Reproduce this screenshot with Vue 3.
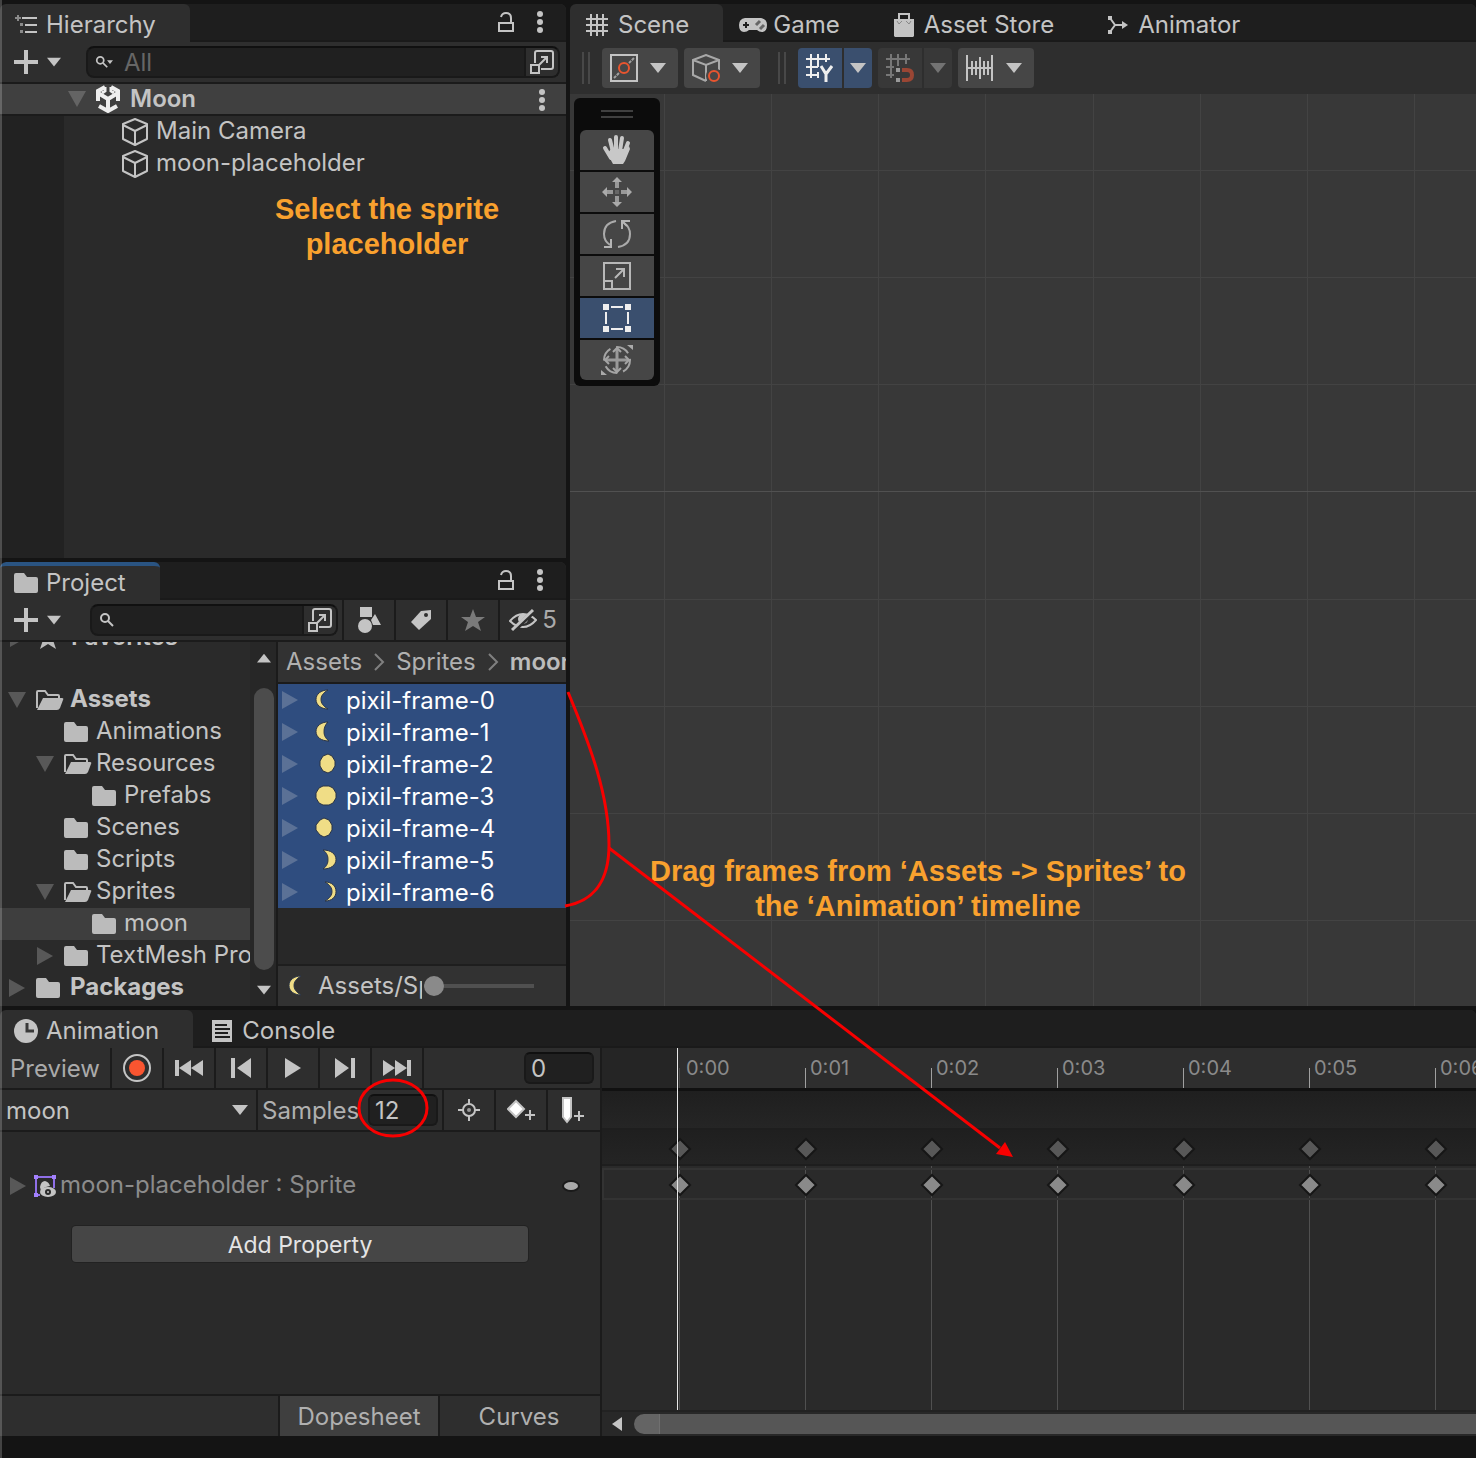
<script setup>
import { ref } from 'vue'

const hierarchySearch = ref('')
const projectSearch = ref('')
const currentFrame = ref('0')
const samples = ref('12')
const thumbSize = ref(0)

const sceneTabs = [
  { name: 'Scene', icon: 'i-grid', w: 22, active: true },
  { name: 'Game', icon: 'i-gamepad', w: 28, tight: true },
  { name: 'Asset Store', icon: 'i-bag', w: 20 },
  { name: 'Animator', icon: 'i-animator', w: 20 }
]

const tools = [
  { name: 'View', icon: 'i-hand' },
  { name: 'Move', icon: 'i-move' },
  { name: 'Rotate', icon: 'i-rotate' },
  { name: 'Scale', icon: 'i-scale' },
  { name: 'Rect', icon: 'i-rect', active: true },
  { name: 'Transform', icon: 'i-transform' }
]

const objects = ['Main Camera', 'moon-placeholder']

const folders = [
  { name: 'Assets', level: 0, arrow: 'open', open: true, bold: true },
  { name: 'Animations', level: 1 },
  { name: 'Resources', level: 1, arrow: 'open', open: true },
  { name: 'Prefabs', level: 2 },
  { name: 'Scenes', level: 1 },
  { name: 'Scripts', level: 1 },
  { name: 'Sprites', level: 1, arrow: 'open', open: true },
  { name: 'moon', level: 2, selected: true },
  { name: 'TextMesh Pro', level: 1, arrow: 'closed' },
  { name: 'Packages', level: 0, arrow: 'closed', bold: true }
]

const phases = [
  'M15 2C8 2 3 6 3 11.500C3 17 8 21 15 21C10 18 8 15 8 11.500C8 8 10 5 15 2Z',
  'M15 2C8 2 3 6 3 11.500C3 17 8 21 16 21C12 18 11 15 11 11.500C11 8 12 5 15 2Z',
  'M15 2L19 4L22 9V14L19 19L15 21L10 19L7 14V9L10 4Z',
  'M10 2H16L20 4L23 9V14L20 19L16 21H10L6 19L3 14V9L6 4Z',
  'M11 2L16 4L19 9V14L16 19L11 21L7 19L3 14V9L7 4Z',
  'M10 2C18 2 23 6 23 11.500C23 17 18 21 10 21C14 18 15 15 15 11.500C15 8 14 5 10 2Z',
  'M12 2C19 2 23 6 23 11.500C23 17 19 21 12 21C17 18 19 15 19 11.500C19 8 17 5 12 2Z'
]
const sprites = phases.map((path, i) => ({ name: `pixil-frame-${i}`, path }))

const playback = [
  { name: 'First key', icon: 'i-first' },
  { name: 'Previous key', icon: 'i-prev' },
  { name: 'Play', icon: 'i-play' },
  { name: 'Next key', icon: 'i-next' },
  { name: 'Last key', icon: 'i-last' }
]

const keys = [0, 1, 2, 3, 4, 5, 6].map((n) => `0:0${n}`)

const cell = 750 / 7
const columns = Array.from({ length: 24 }, (_, i) => Math.round(94 + i * cell))
const rows = Array.from({ length: 16 }, (_, i) => ({
  y: Math.round(76 + i * cell),
  axis: i === 3
}))
</script>

<template>
  <main class="editor">
    <svg class="sprite-sheet" aria-hidden="true">
      <symbol id="i-list" viewBox="0 0 24 20">
        <path d="M4 0V6M1 3H7" stroke="#8a8a8a" stroke-width="2" />
        <path d="M8 3H23M11 10H23M11 17H23" stroke="#c4c4c4" stroke-width="2" />
        <path d="M6 8h3v3h-3zM6 15h3v3h-3z" fill="#8a8a8a" />
      </symbol>
      <symbol id="i-plus" viewBox="0 0 24 24">
        <path d="M12 0V24M0 12H24" stroke="#c4c4c4" stroke-width="4" />
      </symbol>
      <symbol id="i-down" viewBox="0 0 16 10"><path d="M0 0H16L8 10Z" fill="currentColor" /></symbol>
      <symbol id="i-fold-open" viewBox="0 0 18 16"><path d="M0 0H18L9 16Z" fill="currentColor" /></symbol>
      <symbol id="i-fold-closed" viewBox="0 0 16 18"><path d="M0 0L16 9L0 18Z" fill="currentColor" /></symbol>
      <symbol id="i-search" viewBox="0 0 16 16">
        <circle cx="6" cy="6" r="4" fill="none" stroke="#c4c4c4" stroke-width="2" />
        <path d="M9 9L14 14" stroke="#c4c4c4" stroke-width="2" />
      </symbol>
      <symbol id="i-popout" viewBox="0 0 24 24">
        <path d="M5 13V3Q5 1 7 1H21Q23 1 23 3V17Q23 19 21 19H11" fill="none" stroke="#c4c4c4" stroke-width="2" />
        <path d="M1 15H9V23H1ZM9 15L17 7M11 7H17V13" fill="none" stroke="#c4c4c4" stroke-width="2" />
      </symbol>
      <symbol id="i-lock" viewBox="0 0 16 20">
        <path d="M1 11H15V19H1ZM13 11V6Q13 1 8 1Q4 1 3 5" fill="none" stroke="#c4c4c4" stroke-width="2" />
      </symbol>
      <symbol id="i-dots" viewBox="0 0 6 22">
        <g fill="#c4c4c4"><circle cx="3" cy="3" r="3" /><circle cx="3" cy="11" r="3" /><circle cx="3" cy="19" r="3" /></g>
      </symbol>
      <symbol id="i-unity" viewBox="0 0 26 28">
        <path d="M10 2L3 6V16M16 2L23 6V16M4 21L13 26L22 21" fill="none" stroke="#eee" stroke-width="4" />
        <path d="M13 13V26M13 14L3 8M13 14L23 8" fill="none" stroke="#eee" stroke-width="4" />
        <path d="M10 2V6L7 8M16 2V6L19 8" fill="none" stroke="#eee" stroke-width="3" />
      </symbol>
      <symbol id="i-cube" viewBox="0 0 28 28">
        <path d="M14 1L26 6V21L14 27L2 21V6ZM2 7L14 13L26 7M14 13V27" fill="none" stroke="#c4c4c4" stroke-width="2" stroke-linejoin="round" />
      </symbol>
      <symbol id="i-folder" viewBox="0 0 24 20">
        <path d="M0 2Q0 0 2 0H10L13 4H22Q24 4 24 6V18Q24 20 22 20H2Q0 20 0 18Z" fill="#bbb" />
      </symbol>
      <symbol id="i-folder-open" viewBox="0 0 28 20">
        <path d="M1 18V2Q1 1 2 1H9L12 5H22Q23 5 23 6V8" fill="none" stroke="#bbb" stroke-width="2" />
        <path d="M1 20L7 8H26Q28 8 27 10L24 18Q23 20 21 20Z" fill="#bbb" />
      </symbol>
      <symbol id="i-star" viewBox="0 0 24 22">
        <path d="M12 0L15 8L24 8L17 13L20 22L12 17L4 22L7 13L0 8L9 8Z" fill="currentColor" />
      </symbol>
      <symbol id="i-grid" viewBox="0 0 22 22">
        <path d="M5 0V22M11 0V22M17 0V22M0 5H22M0 11H22M0 17H22" stroke="#c4c4c4" stroke-width="2" />
      </symbol>
      <symbol id="i-gamepad" viewBox="0 0 28 16">
        <path d="M6 1H22Q28 2 28 8Q28 15 23 15Q20 15 18 13H10Q8 15 5 15Q0 15 0 8Q0 2 6 1Z" fill="#c4c4c4" />
        <path d="M7 5V11M4 8H10" stroke="#1e1e1e" stroke-width="2" />
        <path d="M17 8L21 4M21 12L25 8" stroke="#666" stroke-width="3" />
      </symbol>
      <symbol id="i-bag" viewBox="0 0 20 24">
        <path d="M5 7V1H15V7" fill="none" stroke="#c4c4c4" stroke-width="2" />
        <path d="M0 6H20V23L19 24H1L0 23Z" fill="#c4c4c4" />
        <path d="M3 8L5 11L8 8M12 8L15 11L17 8" fill="none" stroke="#888" stroke-width="1" />
      </symbol>
      <symbol id="i-animator" viewBox="0 0 20 20">
        <path d="M2 3L7 10L2 17M7 10H16" fill="none" stroke="#c4c4c4" stroke-width="2" />
        <path d="M14 6L20 10L14 14ZM0 1H4V5H0ZM0 15H4V19H0Z" fill="#c4c4c4" />
      </symbol>
      <symbol id="i-gizmo" viewBox="0 0 28 28">
        <path d="M1 1H27V27H1Z" fill="none" stroke="#c4c4c4" stroke-width="2" />
        <path d="M4 24L9 19M19 9L24 4" stroke="#a0a0a0" stroke-width="2" stroke-dasharray="3 1" />
        <circle cx="14" cy="14" r="5" fill="none" stroke="#e8552f" stroke-width="2" />
      </symbol>
      <symbol id="i-shading" viewBox="0 0 28 28">
        <path d="M1 6L14 1L27 6L14 11ZM1 6V21L14 27M27 6V16M14 11V27" fill="none" stroke="#a8a8a8" stroke-width="2" />
        <circle cx="22" cy="22" r="8" fill="#464646" />
        <circle cx="22" cy="22" r="5" fill="none" stroke="#e8552f" stroke-width="2" />
      </symbol>
      <symbol id="i-grid-y" viewBox="0 0 28 28">
        <path d="M5 0V24M12 0V13M12 18V24M20 0V8M0 5H24M0 13H12M0 21H12" stroke="#eee" stroke-width="2" />
        <path d="M15 12L20 20L26 12M20 19V28" fill="none" stroke="#eee" stroke-width="3" />
      </symbol>
      <symbol id="i-snap" viewBox="0 0 28 28">
        <path d="M5 0V24M12 0V12M20 0V10M0 5H24M0 13H8M0 21H8" stroke="#777" stroke-width="2" />
        <path d="M10 14H14V18H10ZM10 24H14V28H10Z" fill="#999" />
        <path d="M16 16H21Q26 16 26 21Q26 26 21 26H16" fill="none" stroke="#9a4634" stroke-width="4" />
      </symbol>
      <symbol id="i-increment" viewBox="0 0 28 28">
        <path d="M1 1V27M26 1V27M6 7V21M10 7V21M14 3V25M18 7V21M22 7V21M1 14H26" stroke="#c4c4c4" stroke-width="2" />
      </symbol>
      <symbol id="i-hand" viewBox="0 0 32 32">
        <path d="M9 6L12 18M15 3V17M21 4L19 17M27 9L23 19M4 14L10 24" stroke="#c8c8c8" stroke-width="4" stroke-linecap="round" />
        <path d="M10 15H24L28 12L29 15L24 27L22 30H12Q10 26 6 20Z" fill="#c8c8c8" />
      </symbol>
      <symbol id="i-move" viewBox="0 0 32 32">
        <path d="M16 4V12M16 20V28M4 16H12M20 16H28" stroke="#999" stroke-width="4" />
        <path d="M11 6L16 1L21 6ZM11 26L16 31L21 26ZM6 11L1 16L6 21ZM26 11L31 16L26 21Z" fill="#aaa" />
        <path d="M14 14H18V18H14Z" fill="#666" />
      </symbol>
      <symbol id="i-rotate" viewBox="0 0 32 32">
        <path d="M15 3Q3 5 3 16Q3 23 9 27M17 29Q29 27 29 16Q29 9 23 5" fill="none" stroke="#aaa" stroke-width="2" />
        <path d="M3 29H10V21M29 3H21V11M22 4L26 8" fill="none" stroke="#b5b5b5" stroke-width="2" />
      </symbol>
      <symbol id="i-scale" viewBox="0 0 32 32">
        <path d="M3 3H29V29H3ZM3 21H11V29M14 18L22 10M15 9H23V17" fill="none" stroke="#b8b8b8" stroke-width="2" />
      </symbol>
      <symbol id="i-rect" viewBox="0 0 32 32">
        <path d="M2 2H8V8H2ZM24 2H30V8H24ZM2 24H8V30H2ZM24 24H30V30H24Z" fill="#eee" />
        <path d="M10 5H22M10 27H22M5 10V22M27 10V22" stroke="#eee" stroke-width="2" />
      </symbol>
      <symbol id="i-transform" viewBox="0 0 32 32">
        <circle cx="16" cy="16" r="13" fill="none" stroke="#a5a5a5" stroke-width="2" stroke-dasharray="14 6" />
        <path d="M16 5V27M5 16H27" stroke="#999" stroke-width="3" />
        <path d="M12 8L16 4L20 8M12 24L16 28L20 24M8 12L4 16L8 20M24 12L28 16L24 20" fill="none" stroke="#a5a5a5" stroke-width="2" />
        <path d="M26 1H32V6ZM0 26V31H6Z" fill="#aaa" />
      </symbol>
      <symbol id="i-shapes" viewBox="0 0 24 28">
        <path d="M3 1H15V11H3ZM18 8L24 19H16L14 14Z" fill="#c4c4c4" />
        <circle cx="8" cy="20" r="7" fill="#c4c4c4" />
      </symbol>
      <symbol id="i-tag" viewBox="0 0 20 20">
        <path d="M10 1L20 0V9L8 20L0 12Z" fill="#c4c4c4" /><circle cx="15" cy="5" r="2" fill="#2e2e2e" />
      </symbol>
      <symbol id="i-eye" viewBox="0 0 28 24">
        <path d="M1 13Q7 6 14 6Q21 6 27 12Q21 19 14 19Q7 19 1 13Z" fill="none" stroke="#c4c4c4" stroke-width="2" />
        <circle cx="14" cy="11" r="5" fill="#c4c4c4" />
        <path d="M4 23L25 3" stroke="#2e2e2e" stroke-width="5" />
        <path d="M3 22L24 2" stroke="#c4c4c4" stroke-width="3" />
      </symbol>
      <symbol id="i-clock" viewBox="0 0 24 24">
        <circle cx="12" cy="12" r="12" fill="#c4c4c4" /><path d="M13 4V12H20" fill="none" stroke="#3a3a3a" stroke-width="3" />
      </symbol>
      <symbol id="i-console" viewBox="0 0 20 22">
        <path d="M0 0H20V22H0Z" fill="#c4c4c4" /><path d="M3 5H15M3 9H18M3 13H16M3 17H18" stroke="#1e1e1e" stroke-width="2" />
      </symbol>
      <symbol id="i-first" viewBox="0 0 28 20">
        <path d="M0 2H4V18H0ZM16 2V18L4 10ZM28 2V18L16 10Z" fill="#c4c4c4" />
      </symbol>
      <symbol id="i-prev" viewBox="0 0 28 20">
        <path d="M4 0H8V20H4ZM24 0V20L10 10Z" fill="#c4c4c4" />
      </symbol>
      <symbol id="i-play" viewBox="0 0 28 20"><path d="M6 0L22 10L6 20Z" fill="#c4c4c4" /></symbol>
      <symbol id="i-next" viewBox="0 0 28 20">
        <path d="M20 0H24V20H20ZM4 0V20L18 10Z" fill="#c4c4c4" />
      </symbol>
      <symbol id="i-last" viewBox="0 0 28 20">
        <path d="M24 2H28V18H24ZM12 2V18L24 10ZM0 2V18L12 10Z" fill="#c4c4c4" />
      </symbol>
      <symbol id="i-target" viewBox="0 0 22 22">
        <path d="M11 0V6M11 16V22M0 11H6M16 11H22" stroke="#c4c4c4" stroke-width="2" />
        <circle cx="11" cy="11" r="6" fill="none" stroke="#c4c4c4" stroke-width="2" /><circle cx="11" cy="11" r="2" fill="#999" />
      </symbol>
      <symbol id="i-add-key" viewBox="0 0 28 24">
        <path d="M9 3L17 11L9 19L1 11Z" fill="#fff" stroke="#c4c4c4" stroke-width="2" />
        <path d="M23 12V22M18 17H28" stroke="#c4c4c4" stroke-width="2" />
      </symbol>
      <symbol id="i-add-event" viewBox="0 0 24 28">
        <path d="M2 2H10V21L6 26L2 21Z" fill="#fff" stroke="#c4c4c4" stroke-width="2" />
        <path d="M18 15V25M13 20H23" stroke="#c4c4c4" stroke-width="2" />
      </symbol>
      <symbol id="i-renderer" viewBox="0 0 22 22">
        <path d="M2 2H20V13M2 2V20H6" fill="none" stroke="#8f6fe8" stroke-width="2" />
        <path d="M0 0H4V4H0ZM18 0H22V4H18ZM0 18H4V22H0Z" fill="#a482ff" />
        <path d="M6 12Q7 6 11 6Q15 7 16 11Q9 12 7 16Z" fill="#c4c4c4" />
        <ellipse cx="14" cy="17" rx="8" ry="5" fill="#c4c4c4" />
        <circle cx="14" cy="17" r="3" fill="#2a2a2a" /><circle cx="14" cy="17" r="1" fill="#c4c4c4" />
      </symbol>
      <symbol id="i-key" viewBox="0 0 24 24">
        <path d="M12 2L22 12L12 22L2 12Z" fill="currentColor" stroke="#161616" stroke-width="2" />
      </symbol>
    </svg>

    <div class="upper">
      <div class="side">
        <section class="panel hierarchy">
          <header class="tabs">
            <h2 class="tab active hierarchy-tab"><svg width="24" height="20"><use href="#i-list" /></svg>Hierarchy</h2>
            <div class="tab-actions">
              <button type="button" aria-label="Lock"><svg width="16" height="20"><use href="#i-lock" /></svg></button>
              <button type="button" aria-label="Menu"><svg width="6" height="22"><use href="#i-dots" /></svg></button>
            </div>
          </header>
          <div class="bar">
            <button type="button" class="create" aria-label="Create">
              <svg width="24" height="24"><use href="#i-plus" /></svg><svg width="14" height="10"><use href="#i-down" /></svg>
            </button>
            <div class="search wide">
              <svg width="14" height="16"><use href="#i-search" /></svg><svg class="mini" width="6" height="4"><use href="#i-down" /></svg>
              <input v-model="hierarchySearch" type="text" placeholder="All" aria-label="Search hierarchy" />
              <button type="button" aria-label="Open search"><svg width="24" height="24"><use href="#i-popout" /></svg></button>
            </div>
          </div>
          <div class="scene-root">
            <svg class="fold" width="18" height="16"><use href="#i-fold-open" /></svg>
            <svg width="26" height="28"><use href="#i-unity" /></svg>
            <strong class="label">Moon</strong>
            <button type="button" aria-label="Scene menu"><svg width="6" height="22"><use href="#i-dots" /></svg></button>
          </div>
          <ul class="objects">
            <li v-for="name in objects" :key="name">
              <svg width="28" height="28"><use href="#i-cube" /></svg><span class="label">{{ name }}</span>
            </li>
          </ul>
        </section>

        <section class="panel project">
          <header class="tabs">
            <h2 class="tab active focused"><svg width="24" height="20"><use href="#i-folder" /></svg>Project</h2>
            <div class="tab-actions">
              <button type="button" aria-label="Lock"><svg width="16" height="20"><use href="#i-lock" /></svg></button>
              <button type="button" aria-label="Menu"><svg width="6" height="22"><use href="#i-dots" /></svg></button>
            </div>
          </header>
          <div class="bar project-bar">
            <button type="button" class="create" aria-label="Create">
              <svg width="24" height="24"><use href="#i-plus" /></svg><svg width="14" height="10"><use href="#i-down" /></svg>
            </button>
            <div class="search">
              <svg width="16" height="16"><use href="#i-search" /></svg>
              <input v-model="projectSearch" type="text" aria-label="Search project" />
              <button type="button" aria-label="Open search"><svg width="24" height="24"><use href="#i-popout" /></svg></button>
            </div>
            <button type="button" class="cell" aria-label="Search by type"><svg width="24" height="28"><use href="#i-shapes" /></svg></button>
            <button type="button" class="cell" aria-label="Search by label"><svg width="20" height="20"><use href="#i-tag" /></svg></button>
            <button type="button" class="cell dim" aria-label="Save search"><svg width="24" height="22"><use href="#i-star" /></svg></button>
            <button type="button" class="cell hidden-count"><svg width="28" height="24"><use href="#i-eye" /></svg>5</button>
          </div>
          <div class="browser">
            <div class="folders">
              <ul>
                <li class="favorites">
                  <svg class="fold" width="16" height="18"><use href="#i-fold-closed" /></svg>
                  <svg class="star" width="24" height="22"><use href="#i-star" /></svg><strong class="label">Favorites</strong>
                </li>
                <li v-for="f in folders" :key="f.name" :class="['level-' + f.level, { selected: f.selected, bold: f.bold }]">
                  <span class="fold">
                    <svg v-if="f.arrow === 'open'" width="18" height="16"><use href="#i-fold-open" /></svg>
                    <svg v-else-if="f.arrow" width="16" height="18"><use href="#i-fold-closed" /></svg>
                  </span>
                  <svg class="folder" width="28" height="20"><use v-if="f.open" href="#i-folder-open" /><use v-else href="#i-folder" width="24" height="20" /></svg>
                  <span class="label">{{ f.name }}</span>
                </li>
              </ul>
              <div class="scroll-y">
                <svg class="up" width="14" height="10"><use href="#i-down" /></svg>
                <span class="thumb"></span>
                <svg width="14" height="10"><use href="#i-down" /></svg>
              </div>
            </div>
            <div class="assets">
              <nav class="crumbs">
                <a href="#">Assets</a><svg width="12" height="18" viewBox="0 0 12 18"><path d="M2 1L10 9L2 17" /></svg>
                <a href="#">Sprites</a><svg width="12" height="18" viewBox="0 0 12 18"><path d="M2 1L10 9L2 17" /></svg>
                <a href="#" class="here">moon</a>
              </nav>
              <ul class="frames">
                <li v-for="s in sprites" :key="s.name">
                  <svg class="fold" width="16" height="18"><use href="#i-fold-closed" /></svg>
                  <svg class="moon" width="26" height="24" viewBox="0 0 26 24"><path :d="s.path" /></svg>
                  <span class="frame-name">{{ s.name }}</span>
                </li>
              </ul>
              <footer class="asset-footer">
                <svg class="moon" width="26" height="24" viewBox="0 0 26 24"><path :d="phases[0]" /></svg>
                <span class="path">Assets/Sprites</span>
                <input v-model="thumbSize" type="range" min="0" max="100" aria-label="Icon size" />
              </footer>
            </div>
          </div>
        </section>
      </div>

      <section class="panel scene">
        <header class="tabs">
          <h2 v-for="t in sceneTabs" :key="t.name" :class="['tab', { active: t.active, tight: t.tight }]">
            <svg :width="t.w" height="24"><use :href="'#' + t.icon" /></svg>{{ t.name }}
          </h2>
        </header>
        <div class="scene-bar">
          <span class="grip"></span>
          <button type="button" class="tool" aria-label="Draw mode"><svg width="28" height="28"><use href="#i-gizmo" /></svg><svg width="16" height="10"><use href="#i-down" /></svg></button>
          <button type="button" class="tool" aria-label="Shading"><svg width="28" height="28"><use href="#i-shading" /></svg><svg width="16" height="10"><use href="#i-down" /></svg></button>
          <span class="grip second"></span>
          <div class="split on">
            <button type="button" aria-label="Grid axis"><svg width="28" height="28"><use href="#i-grid-y" /></svg></button>
            <button type="button" aria-label="Grid options"><svg width="16" height="10"><use href="#i-down" /></svg></button>
          </div>
          <div class="split off">
            <button type="button" disabled aria-label="Grid snapping"><svg width="28" height="28"><use href="#i-snap" /></svg></button>
            <button type="button" disabled aria-label="Snapping options"><svg width="16" height="10"><use href="#i-down" /></svg></button>
          </div>
          <button type="button" class="tool" aria-label="Increment snap"><svg width="28" height="28"><use href="#i-increment" /></svg><svg width="16" height="10"><use href="#i-down" /></svg></button>
        </div>
        <div class="canvas">
          <svg class="lines" aria-hidden="true">
            <rect v-for="x in columns" :key="'x' + x" :x="x" y="0" width="1" height="100%" />
            <rect v-for="r in rows" :key="'y' + r.y" x="0" :y="r.y" width="100%" height="1" :class="{ axis: r.axis }" />
          </svg>
          <div class="toolbox">
            <span class="handle"></span>
            <button v-for="t in tools" :key="t.name" type="button" :class="{ active: t.active }" :aria-label="t.name">
              <svg width="32" height="32"><use :href="'#' + t.icon" /></svg>
            </button>
          </div>
        </div>
      </section>
    </div>

    <section class="panel animation">
      <header class="tabs">
        <h2 class="tab active anim-tab"><svg width="24" height="24"><use href="#i-clock" /></svg>Animation</h2>
        <h2 class="tab console-tab"><svg width="20" height="22"><use href="#i-console" /></svg>Console</h2>
      </header>
      <div class="anim-body">
        <div class="controls">
          <div class="bar">
            <button type="button" class="preview">Preview</button>
            <button type="button" class="cell" aria-label="Record">
              <svg width="28" height="28" viewBox="0 0 28 28"><circle cx="14" cy="14" r="13" fill="none" stroke="#c4c4c4" stroke-width="2" /><circle cx="14" cy="14" r="8" fill="#fa5530" /></svg>
            </button>
            <button v-for="p in playback" :key="p.name" type="button" class="cell" :aria-label="p.name">
              <svg width="28" height="20"><use :href="'#' + p.icon" /></svg>
            </button>
            <div class="frame-box"><input v-model="currentFrame" class="number" type="text" aria-label="Frame" /></div>
          </div>
          <div class="bar clip-bar">
            <div class="clip">
              <select aria-label="Clip"><option>moon</option></select>
              <svg width="16" height="10"><use href="#i-down" /></svg>
            </div>
            <div class="samples">
              <label for="samples">Samples</label>
              <input id="samples" v-model="samples" class="number" type="text" />
            </div>
            <button type="button" class="cell" aria-label="Filter by selection"><svg width="22" height="22"><use href="#i-target" /></svg></button>
            <button type="button" class="cell" aria-label="Add keyframe"><svg width="28" height="24"><use href="#i-add-key" /></svg></button>
            <button type="button" class="cell" aria-label="Add event"><svg width="24" height="28"><use href="#i-add-event" /></svg></button>
          </div>
          <div class="properties">
            <div class="property">
              <svg class="fold" width="16" height="18"><use href="#i-fold-closed" /></svg>
              <svg width="22" height="22"><use href="#i-renderer" /></svg>
              <span class="label">moon-placeholder : Sprite</span>
              <button type="button" class="curve-key" aria-label="Key options"></button>
            </div>
            <button type="button" class="add-property">Add Property</button>
          </div>
          <footer class="modes">
            <button type="button" class="active">Dopesheet</button>
            <button type="button">Curves</button>
          </footer>
        </div>
        <div class="timeline">
          <div class="ruler">
            <span v-for="k in keys" :key="k" class="tick">{{ k }}</span>
          </div>
          <div class="events"></div>
          <div class="lane summary">
            <svg v-for="k in keys" :key="k" width="24" height="24"><use href="#i-key" /></svg>
          </div>
          <div class="dopes">
            <div class="guides"><span v-for="k in keys" :key="k"></span></div>
            <div class="lane keys">
              <svg v-for="k in keys" :key="k" width="24" height="24"><use href="#i-key" /></svg>
            </div>
          </div>
          <div class="scroll-x">
            <svg width="10" height="14" viewBox="0 0 10 14"><path d="M10 0V14L0 7Z" fill="#c4c4c4" /></svg>
            <span class="track"></span>
          </div>
          <span class="playhead"></span>
        </div>
      </div>
    </section>

    <p class="note note-select">Select the sprite<br />placeholder</p>
    <p class="note note-drag">Drag frames from ‘Assets -&gt; Sprites’ to<br />the ‘Animation’ timeline</p>
    <svg class="marks" width="1020" height="1170" viewBox="0 0 1020 1170" aria-hidden="true">
      <g fill="none" stroke="#f80000" stroke-width="3">
        <path d="M568 692C590 745 609 795 609 845C609 885 590 902 565 906" />
        <path d="M609 848L1000 1148" />
        <ellipse cx="393" cy="1108" rx="34" ry="28" />
      </g>
      <path d="M1013 1157L996 1154L1005 1142Z" fill="#f80000" />
    </svg>
  </main>
</template>

<style>
body {
  margin: 0;
  background: #141414;
}
</style>

<style scoped>
.editor {
  position: relative;
  display: flex;
  flex-direction: column;
  gap: 4px;
  box-sizing: border-box;
  min-height: 100vh;
  padding: 4px 0 22px;
  overflow: hidden;
  background: #141414;
  color: #c4c4c4;
  font: 400 24px/28px Inter, "Liberation Sans", sans-serif;
}
.editor::after {
  content: "";
  position: absolute;
  inset: 0 auto 0 0;
  width: 2px;
  background: rgba(255, 255, 255, 0.2);
}
.sprite-sheet {
  position: absolute;
  width: 0;
  height: 0;
}
svg {
  flex: none;
  display: block;
}
button,
input,
select {
  box-sizing: border-box;
  margin: 0;
  padding: 0;
  border: 0;
  background: none;
  color: inherit;
  font: inherit;
}
button {
  display: flex;
  align-items: center;
  justify-content: center;
}
ul {
  margin: 0;
  padding: 0;
  list-style: none;
}
strong {
  font-weight: 600;
}
.fold {
  color: #585858;
}

.upper {
  flex: 1;
  display: grid;
  grid-template-columns: 566px minmax(0, 1fr);
  gap: 4px;
}
.side {
  display: flex;
  flex-direction: column;
  gap: 4px;
}
.panel {
  display: flex;
  flex-direction: column;
  min-width: 0;
  overflow: hidden;
  border-radius: 6px 6px 0 0;
  background: #2a2a2a;
}
.hierarchy {
  flex: 1;
}
.tabs {
  display: flex;
  height: 38px;
  background: linear-gradient(#1e1e1e 36px, #1a1a1a 36px);
}
.tab {
  display: flex;
  align-items: center;
  gap: 10px;
  box-sizing: border-box;
  margin: 0;
  padding: 4px 38px 0 16px;
  border-radius: 6px 6px 0 0;
  font-size: 24px;
  font-weight: 400;
  white-space: nowrap;
}
.tab.active {
  padding-right: 34px;
  background: #2e2e2e;
}
.tab.tight {
  gap: 6px;
}
.hierarchy-tab,
.anim-tab,
.focused {
  gap: 8px;
  padding-left: 14px;
}
.focused {
  border-top: 4px solid #2a5482;
  padding-top: 0;
}
.tab-actions {
  display: flex;
  gap: 23px;
  margin-left: auto;
  padding: 0 23px 2px 0;
}
.bar {
  display: flex;
  align-items: center;
  height: 40px;
  border-bottom: 2px solid #1b1b1b;
  background: #2e2e2e;
}
.create {
  gap: 9px;
  margin-left: 14px;
}
.search {
  display: flex;
  align-items: center;
  flex: 1;
  box-sizing: border-box;
  height: 32px;
  min-width: 0;
  margin: 0 4px 0 29px;
  padding-left: 7px;
  border: 2px solid #191919;
  border-top-color: #101010;
  border-radius: 8px;
  background: #202020;
  overflow: hidden;
}
.search.wide {
  margin: 0 6px 0 25px;
}
.search .mini {
  margin-left: -2px;
}
.search input {
  flex: 1;
  min-width: 0;
  height: 28px;
  padding: 2px 0 0 11px;
}
.search input::placeholder {
  color: #666;
  opacity: 1;
}
.search button {
  width: 34px;
  height: 28px;
  border-left: 2px solid #191919;
  background: #2e2e2e;
}
.scene-root {
  display: flex;
  align-items: center;
  height: 30px;
  padding: 0 21px 0 68px;
  border-bottom: 2px solid #1b1b1b;
  background: #404040;
}
.scene-root .fold {
  margin-right: 9px;
  color: #646464;
}
.scene-root .label {
  margin-left: 9px;
  padding-bottom: 0;
}
.scene-root button {
  margin-left: auto;
  padding-top: 2px;
}
.label {
  padding-bottom: 2px;
  white-space: nowrap;
}
.objects {
  flex: 1;
  min-height: 160px;
  background: linear-gradient(90deg, #222 64px, #2a2a2a 64px);
}
.objects li {
  display: flex;
  align-items: center;
  gap: 7px;
  height: 32px;
  padding-left: 121px;
}

.cell {
  width: 52px;
  height: 40px;
  border-left: 2px solid #1b1b1b;
}
.cell.dim {
  color: #7a7a7a;
}
.hidden-count {
  width: 68px;
  gap: 5px;
  color: #aaa;
}
.browser {
  display: grid;
  grid-template-columns: 276px minmax(0, 1fr);
}
.folders {
  display: grid;
  grid-template-columns: minmax(0, 1fr) 26px;
  overflow: hidden;
}
.folders ul {
  margin-top: -20px;
  padding-bottom: 2px;
  overflow: hidden;
}
.folders li {
  display: flex;
  align-items: center;
  height: 32px;
  padding-left: 8px;
}
.folders .favorites {
  margin-bottom: 30px;
  padding-left: 10px;
}
.favorites .star {
  margin: 0 11px 0 10px;
  color: #bbb;
}
.folders li.level-1 {
  padding-left: 36px;
}
.folders li.level-2 {
  padding-left: 64px;
}
.folders span.fold {
  display: flex;
  justify-content: center;
  flex: none;
  width: 18px;
  margin-right: 10px;
}
.folders .folder {
  margin-right: 4px;
}
.folders .bold {
  font-weight: 700;
}
.folders .bold .folder {
  margin-right: 6px;
}
.folders .selected {
  background: #3e3e3e;
}
.scroll-y {
  display: flex;
  flex-direction: column;
  align-items: center;
  gap: 15px;
  box-sizing: border-box;
  padding: 11px 0 11px 2px;
  background: #272727;
}
.scroll-y .up {
  margin-bottom: 10px;
  transform: rotate(180deg);
}
.scroll-y .thumb {
  flex: 1;
  width: 20px;
  border-radius: 10px;
  background: #4c4c4c;
}
.assets {
  display: flex;
  flex-direction: column;
  min-width: 0;
  border-left: 2px solid #1b1b1b;
  background: #282828;
}
.crumbs {
  display: flex;
  align-items: center;
  gap: 11px;
  height: 40px;
  padding-left: 8px;
  overflow: hidden;
  border-bottom: 2px solid #1b1b1b;
  background: #323232;
}
.crumbs a {
  color: #b0b0b0;
  text-decoration: none;
}
.crumbs .here {
  color: #bcbcbc;
  font-weight: 600;
}
.crumbs path {
  fill: none;
  stroke: #808080;
  stroke-width: 2;
}
.frames li {
  display: flex;
  align-items: center;
  height: 32px;
  padding-left: 4px;
  background: #2f4d7f;
  color: #fff;
}
.frames .fold {
  margin-right: 15px;
  color: #5b7196;
}
.frames .moon {
  margin-right: 7px;
}
.frame-name {
  padding-top: 2px;
}
.moon path {
  fill: #f0dd86;
  stroke: #2b3547;
  stroke-width: 1;
}
.asset-footer {
  display: flex;
  align-items: center;
  height: 40px;
  margin-top: auto;
  padding: 0 32px 0 8px;
  border-top: 2px solid #1e1e1e;
  background: #323232;
}
.asset-footer .path {
  flex: 1;
  min-width: 0;
  margin: 0 2px 0 6px;
  overflow: hidden;
  white-space: nowrap;
}
.asset-footer input {
  appearance: none;
  width: 110px;
  height: 20px;
}
.asset-footer input::-webkit-slider-runnable-track {
  height: 4px;
  background: #505050;
}
.asset-footer input::-webkit-slider-thumb {
  appearance: none;
  width: 20px;
  height: 20px;
  margin-top: -8px;
  border-radius: 50%;
  background: #8a8a8a;
}

.scene-bar {
  display: flex;
  align-items: center;
  gap: 6px;
  height: 52px;
  padding-left: 12px;
  background: #2e2e2e;
}
.grip {
  box-sizing: border-box;
  width: 8px;
  height: 32px;
  margin-right: 6px;
  border: solid #484848;
  border-width: 0 2px;
}
.grip.second {
  margin: 0 6px 0 12px;
}
.tool {
  gap: 12px;
  width: 76px;
  height: 40px;
  padding-right: 4px;
  border-radius: 4px;
  background: #464646;
}
.split {
  display: flex;
  gap: 2px;
  border-radius: 4px;
  overflow: hidden;
}
.split button {
  width: 28px;
  height: 40px;
}
.split button:first-child {
  width: 44px;
}
.on button {
  background: #3a4f6e;
}
.off button {
  background: #383838;
  color: #737373;
}
.canvas {
  position: relative;
  flex: 1;
  background: #383838;
}
.lines {
  position: absolute;
  inset: 0;
  width: 100%;
  height: 100%;
  fill: #434343;
}
.lines .axis {
  fill: #515151;
}
.toolbox {
  position: absolute;
  top: 4px;
  left: 4px;
  display: flex;
  flex-direction: column;
  gap: 2px;
  width: 74px;
  padding: 12px 6px 6px;
  border-radius: 6px;
  background: #0c0c0c;
}
.handle {
  box-sizing: border-box;
  align-self: center;
  width: 32px;
  height: 8px;
  margin-bottom: 10px;
  border: solid #404040;
  border-width: 2px 0;
}
.toolbox button {
  height: 40px;
  background: #464646;
}
.toolbox button.active {
  background: #3a4f6e;
}
.toolbox button:nth-of-type(1) {
  border-radius: 6px 6px 0 0;
}
.toolbox button:last-child {
  border-radius: 0 0 6px 6px;
}

.console-tab {
  padding-left: 19px;
}
.anim-body {
  display: grid;
  grid-template-columns: 600px minmax(0, 1fr);
}
.controls {
  display: flex;
  flex-direction: column;
}
.preview {
  width: 110px;
  padding-top: 2px;
  color: #aaa;
}
.frame-box {
  display: flex;
  flex: 1;
  justify-content: flex-end;
  align-items: center;
  height: 40px;
  padding-right: 6px;
  border-left: 2px solid #1b1b1b;
}
.number {
  width: 70px;
  height: 32px;
  padding-left: 5px;
  border: 2px solid #191919;
  border-top-color: #101010;
  border-radius: 6px;
  background: #202020;
}
.clip-bar {
  padding-right: 2px;
}
.clip {
  display: flex;
  align-items: center;
  width: 256px;
}
.clip select {
  appearance: none;
  flex: 1;
  height: 40px;
  padding: 2px 0 0 6px;
}
.clip svg {
  margin-right: 8px;
}
.samples {
  display: flex;
  align-items: center;
  justify-content: space-between;
  flex: 1;
  height: 40px;
  padding: 0 4px;
  border-left: 2px solid #1b1b1b;
  color: #b0b0b0;
}
.samples label {
  padding-top: 2px;
}
.samples input {
  color: #c4c4c4;
}
.properties {
  flex: 1;
  min-height: 226px;
  padding-top: 36px;
}
.property {
  display: flex;
  align-items: center;
  height: 32px;
  padding: 2px 22px 0 10px;
  margin-bottom: 24px;
  color: #8c8c8c;
}
.property .fold {
  margin-right: 8px;
}
.property .label {
  margin-left: 4px;
}
.curve-key {
  width: 14px;
  height: 8px;
  margin-left: auto;
  border-radius: 50%;
  background: #a8a8a8;
  box-shadow: 0 0 0 2px #1a1a1a;
}
.add-property {
  width: calc(100% - 144px);
  height: 36px;
  margin: 0 72px;
  padding-top: 2px;
  border-radius: 4px;
  background: #464646;
  box-shadow: 0 0 0 1px #222;
  color: #e4e4e4;
  font-size: 23px;
}
.modes {
  display: flex;
  justify-content: flex-end;
  padding-right: 2px;
  border-top: 2px solid #1b1b1b;
  background: #2e2e2e;
}
.modes button {
  width: 160px;
  height: 40px;
  padding-top: 2px;
  border-left: 2px solid #1b1b1b;
  color: #b0b0b0;
}
.modes .active {
  background: #3f3f3f;
}
.timeline {
  position: relative;
  display: flex;
  flex-direction: column;
  min-width: 0;
  overflow: hidden;
  border-left: 2px solid #1b1b1b;
}
.ruler {
  display: flex;
  align-items: flex-end;
  height: 40px;
  padding-left: 77px;
  border-bottom: 3px solid #111;
  background: linear-gradient(90deg, #252525 76px, #2e2e2e 76px);
}
.tick {
  box-sizing: border-box;
  flex: none;
  width: 126px;
  height: 20px;
  padding-left: 4px;
  border-left: 1px solid #a0a0a0;
  color: #8a8a8a;
  font-size: 20px;
  line-height: 0;
}
.tick:first-child {
  padding-left: 6px;
  border-color: #484848;
}
.events {
  height: 37px;
  border-bottom: 2px solid #1e1e1e;
  background: linear-gradient(#1f1f1f, #252525);
}
.lane {
  display: flex;
  align-items: center;
  gap: 102px;
  box-sizing: border-box;
  padding-left: 66px;
}
.summary {
  height: 36px;
  padding-top: 4px;
  border-bottom: 2px solid #1e1e1e;
  background: linear-gradient(#1f1f1f, #242424);
  color: #585858;
}
.dopes {
  position: relative;
  flex: 1;
  padding-top: 2px;
}
.guides {
  position: absolute;
  inset: 0 0 0 77px;
  display: flex;
}
.guides span {
  box-sizing: border-box;
  flex: none;
  width: 126px;
  border-left: 1px solid #505050;
}
.keys {
  position: relative;
  height: 32px;
  padding: 2px 0 0 64px;
  border: 2px solid #333;
  border-right: 0;
  color: #8a8a8a;
}
.scroll-x {
  display: flex;
  align-items: center;
  gap: 12px;
  height: 24px;
  padding-left: 10px;
  border-top: 2px solid #222;
  background: #282828;
}
.scroll-x .track {
  flex: 1;
  height: 20px;
  border-radius: 10px 0 0 10px;
  background: linear-gradient(90deg, #646464 25px, #707070 25px, #707070 26px, #565656 26px);
}
.playhead {
  position: absolute;
  top: 0;
  bottom: 26px;
  left: 75px;
  width: 1px;
  background: #e8e8e8;
}

.note {
  position: absolute;
  margin: 0;
  color: #f9a12e;
  font: 700 29px/35px "Liberation Sans", sans-serif;
  text-align: center;
  white-space: nowrap;
}
.note-select {
  top: 192px;
  left: 275px;
}
.note-drag {
  top: 854px;
  left: 650px;
}
.marks {
  position: absolute;
  top: 0;
  left: 0;
  pointer-events: none;
}
</style>
